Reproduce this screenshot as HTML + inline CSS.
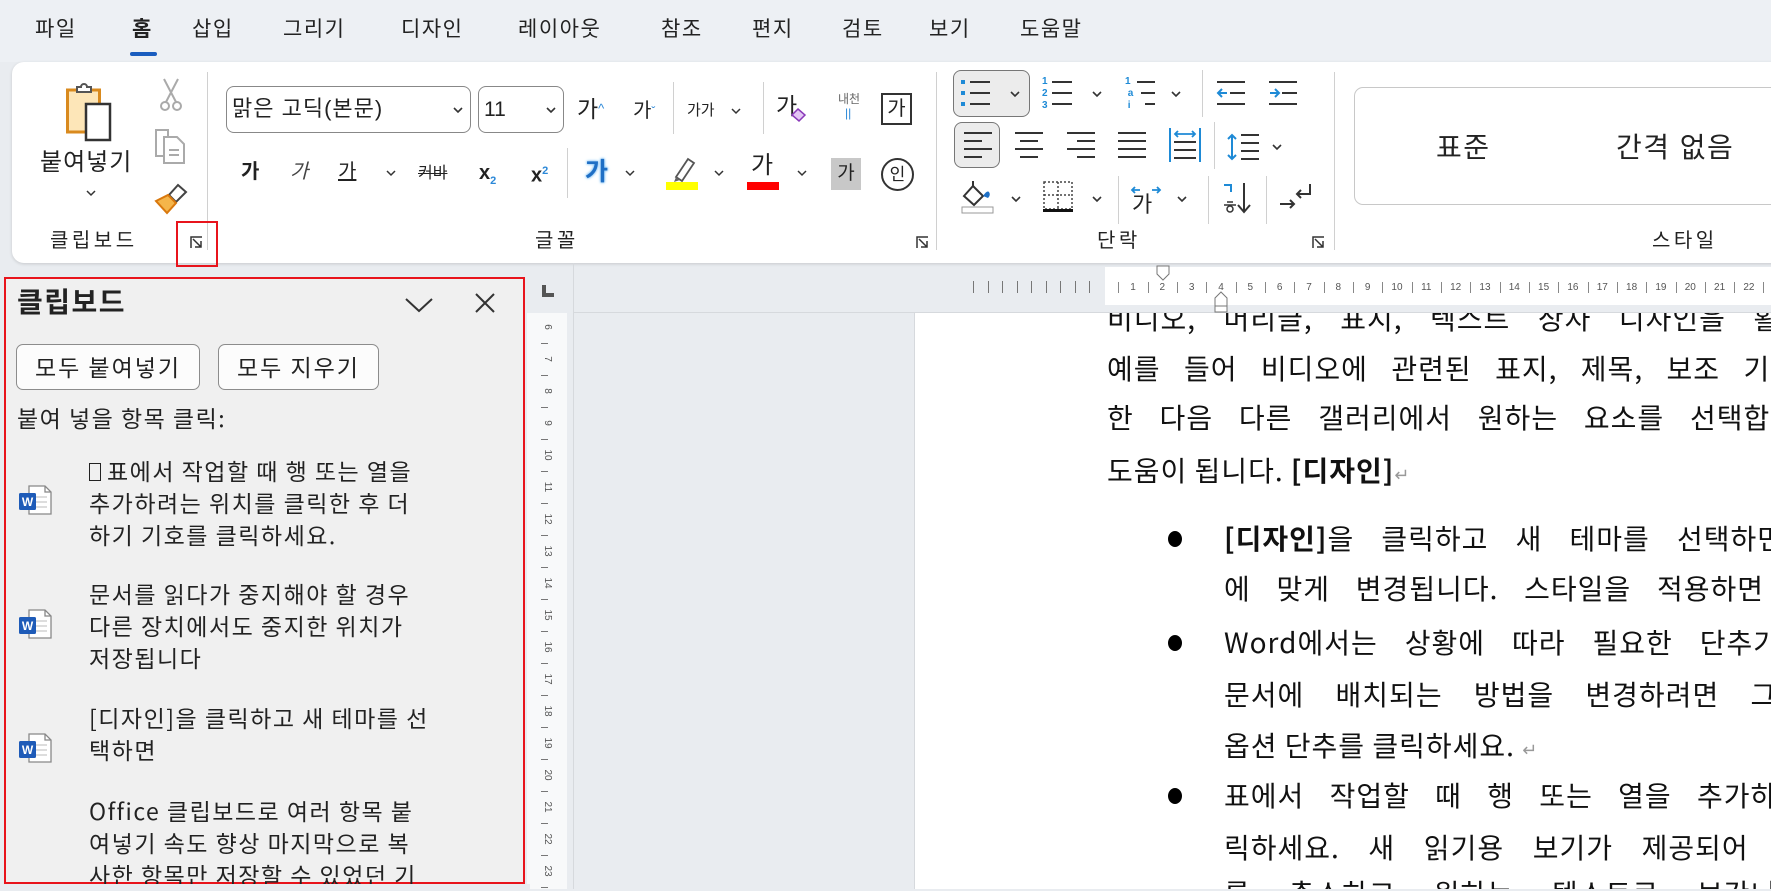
<!DOCTYPE html>
<html><head><meta charset="utf-8">
<style>
*{margin:0;padding:0;box-sizing:border-box}
body{width:1771px;height:889px;overflow:hidden;position:relative;background:#e9ecf0;font-family:"Liberation Sans","Noto Sans CJK KR",sans-serif;color:#222}
.a{position:absolute;white-space:nowrap}
.tab{position:absolute;top:14px;font-size:21px;line-height:32px;color:#222;letter-spacing:1.5px}
.sep{position:absolute;width:1px;background:#d0d0d0}
.lbl{position:absolute;top:228px;font-size:20px;line-height:26px;color:#222;letter-spacing:3.5px}
svg{position:absolute;overflow:visible}
.ln{position:absolute;font-family:"Noto Sans CJK KR",sans-serif;font-size:28px;line-height:34px;color:#111;text-align:justify;text-align-last:justify;white-space:nowrap;letter-spacing:1px}
.ln.nj{text-align-last:left}
.pi{position:absolute;left:89px;font-size:23px;line-height:32px;color:#222;font-family:"Noto Sans CJK KR",sans-serif;letter-spacing:1.5px}
.btn{position:absolute;top:344px;height:46px;border:1.5px solid #8c8c8c;border-radius:7px;background:#fcfcfc;font-size:23px;line-height:43px;text-align:center;font-family:"Noto Sans CJK KR",sans-serif;letter-spacing:2px}
</style></head><body>
<div class="a" style="left:0;top:0;width:1771px;height:62px;background:#edf0f4"></div>
<div class="tab" style="left:35px">파일</div>
<div class="tab" style="left:132px;font-weight:bold">홈</div>
<div class="a" style="left:130px;top:52px;width:27px;height:4px;border-radius:2px;background:#1a5dbf"></div>
<div class="tab" style="left:192px">삽입</div>
<div class="tab" style="left:283px">그리기</div>
<div class="tab" style="left:401px">디자인</div>
<div class="tab" style="left:518px">레이아웃</div>
<div class="tab" style="left:661px">참조</div>
<div class="tab" style="left:752px">편지</div>
<div class="tab" style="left:842px">검토</div>
<div class="tab" style="left:929px">보기</div>
<div class="tab" style="left:1020px">도움말</div>

<div class="a" style="left:12px;top:62px;width:1780px;height:201px;background:#fff;border-radius:12px;box-shadow:0 1px 3px rgba(0,0,0,.15)"></div>

<svg style="left:66px;top:82px" width="56" height="60"><rect x="1.5" y="8" width="32" height="42" fill="#fde6b8" stroke="#d98a1e" stroke-width="3"/><path d="M11 10 v-5 h4 a3 3 0 0 1 6 0 h4 v5 z" fill="#fff" stroke="#555" stroke-width="2"/><rect x="20" y="22" width="24" height="36" fill="#fff" stroke="#333" stroke-width="2.5"/></svg>
<div class="a" style="left:40px;top:148px;font-size:24px;line-height:30px;letter-spacing:1px">붙여넣기</div>
<svg style="left:86px;top:190px" width="10" height="6"><path d="M1 1l4 4 4-4" stroke="#333" stroke-width="1.5" fill="none"/></svg>
<svg style="left:160px;top:78px" width="22" height="34"><path d="M4 1 L16 24 M18 1 L6 24" stroke="#aaa" stroke-width="2" fill="none"/><circle cx="5" cy="28" r="4" fill="none" stroke="#aaa" stroke-width="2"/><circle cx="17" cy="28" r="4" fill="none" stroke="#aaa" stroke-width="2"/></svg>
<svg style="left:154px;top:128px" width="34" height="36"><path d="M2 2h12v26H2z" fill="#fff" stroke="#aaa" stroke-width="2"/><path d="M10 9h13l7 7v19H10z" fill="#fff" stroke="#aaa" stroke-width="2"/><path d="M15 22h10M15 27h10" stroke="#aaa" stroke-width="2"/></svg>
<svg style="left:154px;top:183px" width="34" height="32"><path d="M24 2 L32 9 L22 19 L15 12 Z" fill="#fff" stroke="#444" stroke-width="2"/><path d="M14 12 L22 20 L13 30 L2 18 Z" fill="#f5b54a" stroke="#d9780d" stroke-width="2"/></svg>
<div class="sep" style="left:207px;top:72px;height:178px"></div>
<div class="lbl" style="left:50px">클립보드</div>
<svg style="left:190px;top:236px" width="13" height="13"><path d="M1 12V1h11" stroke="#333" stroke-width="1.5" fill="none"/><path d="M3 3l8 8M5 11h6V5" stroke="#333" stroke-width="1.5" fill="none"/></svg>
<div class="a" style="left:176px;top:221px;width:42px;height:46px;border:2.5px solid #e8141c"></div>

<div class="a" style="left:226px;top:86px;width:245px;height:47px;border:1.5px solid #888;border-radius:8px"></div>
<div class="a" style="left:232px;top:95px;font-size:22px;line-height:28px;letter-spacing:1px">맑은 고딕(본문)</div>
<svg style="left:453px;top:107px" width="10" height="6"><path d="M1 1l4 4 4-4" stroke="#333" stroke-width="1.6" fill="none"/></svg>
<div class="a" style="left:478px;top:86px;width:86px;height:47px;border:1.5px solid #888;border-radius:8px"></div>
<div class="a" style="left:484px;top:96px;font-size:21px;line-height:28px">11</div>
<svg style="left:546px;top:107px" width="10" height="6"><path d="M1 1l4 4 4-4" stroke="#333" stroke-width="1.6" fill="none"/></svg>
<div class="a" style="left:577px;top:95px;font-size:23px;line-height:28px">가<span style="font-size:13px;color:#2b88d8;vertical-align:top">^</span></div>
<div class="a" style="left:633px;top:97px;font-size:20px;line-height:28px">가<span style="font-size:12px;color:#2b88d8;vertical-align:top">ˇ</span></div>
<div class="sep" style="left:673px;top:82px;height:52px"></div>
<div class="a" style="left:687px;top:99px;font-size:15px;line-height:24px">가가</div>
<svg style="left:731px;top:108px" width="10" height="6"><path d="M1 1l4 4 4-4" stroke="#333" stroke-width="1.5" fill="none"/></svg>
<div class="sep" style="left:763px;top:82px;height:52px"></div>
<div class="a" style="left:776px;top:92px;font-size:23px;line-height:28px">가</div>
<svg style="left:790px;top:108px" width="16" height="14"><path d="M8 1l7 6-6 6-7-6z" fill="#e4c6f5" stroke="#8a3ab9" stroke-width="1.5"/></svg>
<div class="a" style="left:838px;top:92px;font-size:12px;line-height:14px;color:#666">내천</div>
<div class="a" style="left:845px;top:106px;font-size:12px;line-height:14px;color:#2b88d8">||</div>
<div class="a" style="left:881px;top:93px;width:31px;height:32px;border:2px solid #333;font-size:20px;line-height:28px;text-align:center">가</div>

<div class="a" style="left:241px;top:159px;font-size:20px;line-height:26px;font-weight:bold">가</div>
<div class="a" style="left:290px;top:159px;font-size:20px;line-height:26px;font-style:italic;color:#444">가</div>
<div class="a" style="left:338px;top:159px;font-size:20px;line-height:26px;text-decoration:underline">가</div>
<svg style="left:386px;top:170px" width="10" height="6"><path d="M1 1l4 4 4-4" stroke="#333" stroke-width="1.5" fill="none"/></svg>
<div class="a" style="left:418px;top:162px;font-size:16px;line-height:24px;text-decoration:line-through">커바</div>
<div class="a" style="left:479px;top:160px;font-size:20px;line-height:26px;font-weight:bold">x<sub style="font-size:11px;color:#2b88d8">2</sub></div>
<div class="a" style="left:531px;top:158px;font-size:20px;line-height:26px;font-weight:bold">x<sup style="font-size:11px;color:#2b88d8">2</sup></div>
<div class="sep" style="left:567px;top:148px;height:50px"></div>
<div class="a" style="left:585px;top:157px;font-size:25px;line-height:30px;font-weight:bold;color:#1f6fc5;text-shadow:0 0 3px #7fc1f5,0 0 2px #7fc1f5">가</div>
<svg style="left:625px;top:170px" width="10" height="6"><path d="M1 1l4 4 4-4" stroke="#333" stroke-width="1.5" fill="none"/></svg>
<svg style="left:666px;top:155px" width="32" height="36"><path d="M10 22 L22 4 L28 8 L16 26 Z" fill="#fff" stroke="#555" stroke-width="1.8"/><path d="M10 22 L8 27 L14 25" fill="#666"/><rect x="0" y="27" width="32" height="8" fill="#ffff00"/></svg>
<svg style="left:714px;top:170px" width="10" height="6"><path d="M1 1l4 4 4-4" stroke="#333" stroke-width="1.5" fill="none"/></svg>
<div class="a" style="left:751px;top:152px;font-size:24px;line-height:28px">가</div>
<div class="a" style="left:747px;top:182px;width:32px;height:8px;background:#f00"></div>
<svg style="left:797px;top:170px" width="10" height="6"><path d="M1 1l4 4 4-4" stroke="#333" stroke-width="1.5" fill="none"/></svg>
<div class="a" style="left:831px;top:158px;width:30px;height:32px;background:#c8c8c8;font-size:19px;line-height:32px;text-align:center">가</div>
<div class="a" style="left:881px;top:158px;width:33px;height:33px;border:2px solid #333;border-radius:50%;font-size:17px;line-height:29px;text-align:center">인</div>
<div class="lbl" style="left:535px">글꼴</div>
<svg style="left:916px;top:236px" width="13" height="13"><path d="M1 12V1h11" stroke="#333" stroke-width="1.5" fill="none"/><path d="M3 3l8 8M5 11h6V5" stroke="#333" stroke-width="1.5" fill="none"/></svg>
<div class="sep" style="left:936px;top:72px;height:178px"></div>

<div class="a" style="left:953px;top:70px;width:77px;height:47px;border:1.5px solid #777;border-radius:8px;background:#ececec"></div>
<svg style="left:961px;top:80px" width="30" height="26"><g fill="#1e8ad6"><rect x="0" y="0" width="4" height="4"/><rect x="0" y="11" width="4" height="4"/><rect x="0" y="22" width="4" height="4"/></g><path d="M9 2h20M9 13h20M9 24h20" stroke="#333" stroke-width="2"/></svg>
<svg style="left:1010px;top:91px" width="10" height="6"><path d="M1 1l4 4 4-4" stroke="#333" stroke-width="1.6" fill="none"/></svg>
<div class="a" style="left:1042px;top:76px;font-size:10px;line-height:12px;color:#1e8ad6;font-weight:bold">1<br>2<br>3</div>
<svg style="left:1050px;top:80px" width="22" height="26"><path d="M2 2h20M2 13h20M2 24h20" stroke="#333" stroke-width="2"/></svg>
<svg style="left:1092px;top:91px" width="10" height="6"><path d="M1 1l4 4 4-4" stroke="#333" stroke-width="1.6" fill="none"/></svg>
<div class="a" style="left:1125px;top:76px;font-size:10px;line-height:12px;color:#1e8ad6;font-weight:bold">1<br>&nbsp;a<br>&nbsp;i</div>
<svg style="left:1135px;top:80px" width="20" height="26"><path d="M2 2h18M6 13h14M10 24h10" stroke="#333" stroke-width="2"/></svg>
<svg style="left:1171px;top:91px" width="10" height="6"><path d="M1 1l4 4 4-4" stroke="#333" stroke-width="1.6" fill="none"/></svg>
<div class="sep" style="left:1202px;top:70px;height:47px"></div>
<svg style="left:1217px;top:80px" width="28" height="26"><path d="M0 2h28M13 13h15M0 24h28" stroke="#333" stroke-width="2"/><path d="M10 13H2M5 9l-4 4 4 4" stroke="#1e8ad6" stroke-width="2" fill="none"/></svg>
<svg style="left:1269px;top:80px" width="28" height="26"><path d="M0 2h28M13 13h15M0 24h28" stroke="#333" stroke-width="2"/><path d="M1 13h8M6 9l4 4-4 4" stroke="#1e8ad6" stroke-width="2" fill="none"/></svg>

<div class="a" style="left:954px;top:122px;width:46px;height:46px;border:1.5px solid #777;border-radius:8px;background:#ececec"></div>
<svg style="left:964px;top:132px" width="28" height="26"><path d="M0 1h28M0 9h18M0 17h28M0 25h18" stroke="#333" stroke-width="2"/></svg>
<svg style="left:1015px;top:132px" width="28" height="26"><path d="M0 1h28M5 9h18M0 17h28M5 25h18" stroke="#333" stroke-width="2"/></svg>
<svg style="left:1067px;top:132px" width="28" height="26"><path d="M0 1h28M10 9h18M0 17h28M10 25h18" stroke="#333" stroke-width="2"/></svg>
<svg style="left:1118px;top:132px" width="28" height="26"><path d="M0 1h28M0 9h28M0 17h28M0 25h28" stroke="#333" stroke-width="2"/></svg>
<svg style="left:1169px;top:128px" width="32" height="34"><path d="M1 0v34M31 0v34" stroke="#1e8ad6" stroke-width="2"/><path d="M6 6h20M9 3l-3 3 3 3M23 3l3 3-3 3" stroke="#1e8ad6" stroke-width="1.8" fill="none"/><path d="M5 14h22M5 22h22M5 30h22" stroke="#333" stroke-width="2"/></svg>
<div class="sep" style="left:1214px;top:122px;height:47px"></div>
<svg style="left:1227px;top:133px" width="34" height="28"><path d="M5 2v24M1 6l4-4 4 4M1 22l4 4 4-4" stroke="#1e8ad6" stroke-width="2" fill="none"/><path d="M14 2h18M14 10h18M14 18h18M14 26h18" stroke="#333" stroke-width="2"/></svg>
<svg style="left:1272px;top:144px" width="10" height="6"><path d="M1 1l4 4 4-4" stroke="#333" stroke-width="1.6" fill="none"/></svg>

<svg style="left:961px;top:180px" width="34" height="34"><path d="M3 16 L12 6 L22 16 L13 25 Z" fill="#fff" stroke="#333" stroke-width="2"/><path d="M12 6 V1" stroke="#333" stroke-width="2"/><path d="M22 16 q4 -6 6 -4 q2 3 -1 6" fill="#1e6fc5"/><rect x="1" y="27" width="31" height="6" fill="#fff" stroke="#999" stroke-width="1"/></svg>
<svg style="left:1011px;top:196px" width="10" height="6"><path d="M1 1l4 4 4-4" stroke="#333" stroke-width="1.6" fill="none"/></svg>
<svg style="left:1043px;top:181px" width="30" height="31"><rect x="1" y="1" width="28" height="27" fill="none" stroke="#444" stroke-width="1.5" stroke-dasharray="2 2"/><path d="M15 1v27M1 14h28" stroke="#444" stroke-width="1.5" stroke-dasharray="2 2"/><path d="M0 29.5h30" stroke="#111" stroke-width="3"/></svg>
<svg style="left:1092px;top:196px" width="10" height="6"><path d="M1 1l4 4 4-4" stroke="#333" stroke-width="1.6" fill="none"/></svg>
<div class="sep" style="left:1118px;top:176px;height:48px"></div>
<svg style="left:1131px;top:186px" width="30" height="8"><path d="M1 4h8M4 1l-3 3 3 3M21 4h8M26 1l3 3-3 3" stroke="#1e8ad6" stroke-width="1.8" fill="none"/></svg>
<div class="a" style="left:1132px;top:193px;font-size:22px;line-height:24px">가</div>
<svg style="left:1177px;top:196px" width="10" height="6"><path d="M1 1l4 4 4-4" stroke="#333" stroke-width="1.6" fill="none"/></svg>
<div class="sep" style="left:1208px;top:176px;height:48px"></div>
<svg style="left:1222px;top:183px" width="32" height="32"><path d="M2 2h7v7" stroke="#1e8ad6" stroke-width="2" fill="none"/><path d="M5 19h6M2 22h12" stroke="#333" stroke-width="1.5"/><circle cx="8" cy="26" r="3" fill="none" stroke="#333" stroke-width="1.5"/><path d="M22 0v28M16 22l6 7 6-7" stroke="#333" stroke-width="2" fill="none"/></svg>
<div class="sep" style="left:1266px;top:176px;height:48px"></div>
<svg style="left:1279px;top:182px" width="34" height="30"><path d="M31 2v10H18M22 8l-4 4 4 4" stroke="#333" stroke-width="2" fill="none"/><path d="M1 22h14M11 18l4 4-4 4" stroke="#333" stroke-width="2" fill="none"/></svg>
<div class="lbl" style="left:1097px">단락</div>
<svg style="left:1312px;top:236px" width="13" height="13"><path d="M1 12V1h11" stroke="#333" stroke-width="1.5" fill="none"/><path d="M3 3l8 8M5 11h6V5" stroke="#333" stroke-width="1.5" fill="none"/></svg>
<div class="sep" style="left:1334px;top:72px;height:178px"></div>

<div class="a" style="left:1354px;top:87px;width:440px;height:118px;border:1.5px solid #c8c8c8;border-radius:9px"></div>
<div class="a" style="left:1436px;top:131px;font-size:28px;line-height:34px;letter-spacing:1.5px">표준</div>
<div class="a" style="left:1616px;top:131px;font-size:28px;line-height:34px;letter-spacing:1.5px">간격 없음</div>
<div class="lbl" style="left:1652px">스타일</div>

<div class="a" style="left:527px;top:313px;width:40px;height:576px;background:#f8f9fa"></div>
<div class="a" style="left:573px;top:263px;width:1px;height:626px;background:#d6d9dd"></div>
<svg style="left:542px;top:285px" width="12" height="12"><path d="M0 0h4v8h8v4H0z" fill="#555"/></svg>
<div class="a" style="left:915px;top:313px;width:856px;height:576px;background:#fff"></div>
<div class="a" style="left:574px;top:312px;width:1197px;height:1px;background:#d6d9dd"></div>
<div class="a" style="left:914px;top:313px;width:1px;height:576px;background:#d6d9dd"></div>
<div id="vr"></div>
<div class="a" style="left:1105px;top:267px;width:666px;height:38px;background:#fff"></div>
<div id="hr"></div>
<svg style="left:1156px;top:265px" width="14" height="16"><path d="M1 1h12v8l-6 6-6-6z" fill="#fff" stroke="#777" stroke-width="1"/></svg>
<svg style="left:1214px;top:291px" width="14" height="22"><path d="M1 15V7l6-6 6 6v8z M1 15h12v6H1z" fill="#fff" stroke="#777" stroke-width="1"/></svg>

<div style="position:absolute;left:0;top:313px;width:1771px;height:576px;overflow:hidden">
<div class="ln" style="left:1107px;top:-12px;width:700px">비디오, 머리글, 표지, 텍스트 상자 디자인을 활용</div>
<div class="ln" style="left:1107px;top:38px;width:690px">예를 들어 비디오에 관련된 표지, 제목, 보조 기사</div>
<div class="ln" style="left:1107px;top:87px;width:690px">한 다음 다른 갤러리에서 원하는 요소를 선택합니</div>
<div class="ln nj" style="left:1107px;top:140px">도움이 됩니다. <b>[디자인]</b><span style="color:#999;font-size:18px">↵</span></div>
<div class="a" style="left:1168px;top:218px;width:14px;height:16px;border-radius:50%;background:#000"></div>
<div class="ln" style="left:1224px;top:208px;width:560px"><b>[디자인]</b>을 클릭하고 새 테마를 선택하면</div>
<div class="ln" style="left:1224px;top:258px;width:540px">에 맞게 변경됩니다. 스타일을 적용하면</div>
<div class="a" style="left:1168px;top:322px;width:14px;height:16px;border-radius:50%;background:#000"></div>
<div class="ln" style="left:1224px;top:312px;width:556px">Word에서는 상황에 따라 필요한 단추가</div>
<div class="ln" style="left:1224px;top:364px;width:580px">문서에 배치되는 방법을 변경하려면 그림</div>
<div class="ln nj" style="left:1224px;top:415px">옵션 단추를 클릭하세요. <span style="color:#999;font-size:18px">↵</span></div>
<div class="a" style="left:1168px;top:475px;width:14px;height:16px;border-radius:50%;background:#000"></div>
<div class="ln" style="left:1224px;top:465px;width:580px">표에서 작업할 때 행 또는 열을 추가하려</div>
<div class="ln" style="left:1224px;top:517px;width:580px">릭하세요. 새 읽기용 보기가 제공되어 읽</div>
<div class="ln" style="left:1224px;top:563px;width:580px">를 축소하고 원하는 텍스트로 보간니다</div>
</div>

<div class="a" style="left:4px;top:277px;width:521px;height:607px;background:#f0f0f0;border:2.5px solid #e8141c"></div>
<div class="a" style="left:17px;top:286px;font-size:28px;line-height:34px;font-weight:bold;letter-spacing:1.5px">클립보드</div>
<svg style="left:405px;top:298px" width="28" height="14"><path d="M1 1l13 12 13-12" stroke="#333" stroke-width="2" fill="none"/></svg>
<svg style="left:475px;top:293px" width="20" height="20"><path d="M1 1l18 18M19 1L1 19" stroke="#333" stroke-width="2" fill="none"/></svg>
<div class="btn" style="left:16px;width:184px">모두 붙여넣기</div>
<div class="btn" style="left:218px;width:161px">모두 지우기</div>
<div class="a" style="left:17px;top:401px;font-size:23px;line-height:32px;font-family:'Noto Sans CJK KR',sans-serif;letter-spacing:1.5px">붙여 넣을 항목 클릭:</div>

<div class="pi" style="top:454px"><span style="display:inline-block;width:12px;height:18px;border:1.5px solid #222;vertical-align:-1px;margin-right:6px"></span>표에서 작업할 때 행 또는 열을<br>추가하려는 위치를 클릭한 후 더<br>하기 기호를 클릭하세요.</div>
<div class="pi" style="top:577px">문서를 읽다가 중지해야 할 경우<br>다른 장치에서도 중지한 위치가<br>저장됩니다</div>
<div class="pi" style="top:701px">[디자인]을 클릭하고 새 테마를 선<br>택하면</div>
<div class="pi" style="top:794px">Office 클립보드로 여러 항목 붙<br>여넣기 속도 향상 마지막으로 복<br>사한 항목만 저장할 수 있었던 기</div>
<div id="wi"></div>
<div class="a" style="left:0;top:884px;width:530px;height:5px;background:#e9ecf0"></div>

<script>
function wicon(y){return '<svg style="left:19px;top:'+y+'px" width="34" height="32"><path d="M10 1h16l6 6v22H10z" fill="#fff" stroke="#888" stroke-width="1.3"/><path d="M26 1v6h6" fill="none" stroke="#888" stroke-width="1.3"/><path d="M14 12h14M14 17h14M14 22h14" stroke="#bbb"/><rect x="0" y="8" width="17" height="17" rx="1.5" fill="#1e5bb8"/><text x="8.5" y="21" font-size="12" font-weight="bold" fill="#fff" text-anchor="middle" font-family="Liberation Sans">W</text></svg>';}
document.getElementById('wi').outerHTML=wicon(485)+wicon(609)+wicon(733);
var h='';
for(var n=6;n<=23;n++){var y=327+(n-6)*32;
h+='<div class="a" style="left:540px;top:'+(y-7)+'px;width:14px;height:14px;font-size:10px;line-height:14px;color:#555;text-align:center;transform:rotate(90deg)">'+n+'</div>';
h+='<div class="a" style="left:541px;top:'+(y+16)+'px;width:7px;height:1px;background:#777"></div>';}
document.getElementById('vr').outerHTML=h;
var r='';
for(var x=973;x<1100;x+=14.5){r+='<div class="a" style="left:'+Math.round(x)+'px;top:281px;width:1px;height:12px;background:#777"></div>';}
for(var n=1;n<=22;n++){var x=1133+(n-1)*29.33;
r+='<div class="a" style="left:'+(x-10)+'px;top:280px;width:20px;font-size:10px;line-height:16px;color:#555;text-align:center">'+n+'</div>';
r+='<div class="a" style="left:'+Math.round(x-14.6)+'px;top:282px;width:1px;height:11px;background:#888"></div>';}
r+='<div class="a" style="left:1763px;top:282px;width:1px;height:11px;background:#888"></div>';
document.getElementById('hr').outerHTML=r;
</script>
</body></html>
